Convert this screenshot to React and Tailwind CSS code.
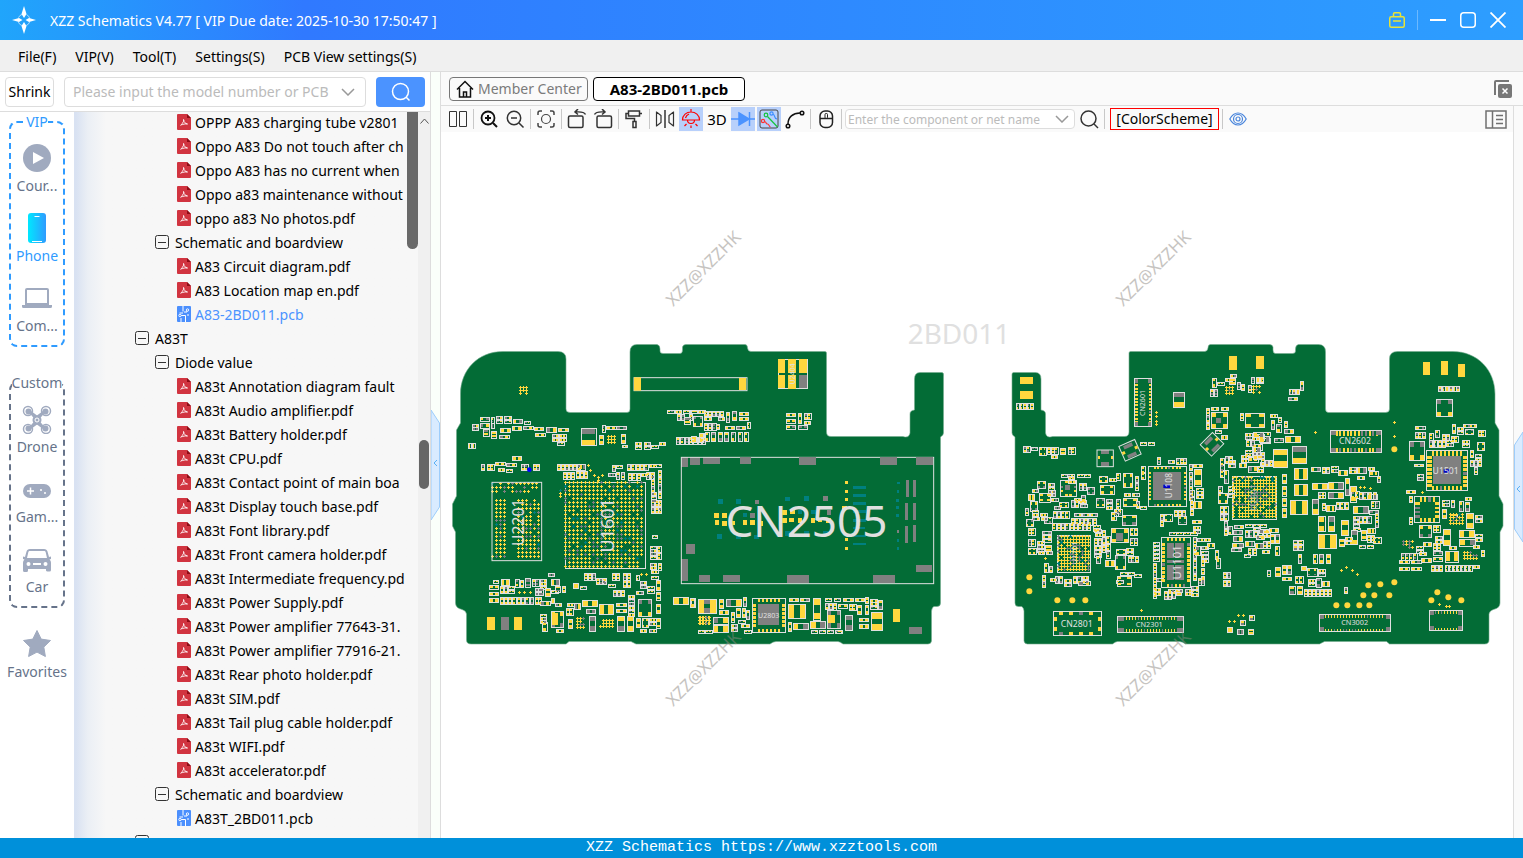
import React from "react";

const YELLOW = "#ffd73e";
const GREY = "#808080";
const TEAL = "#008080";
const SILK = "#e0e0e0";
const BOARD = "#036c36";

const OUTLINE =
  "M460.5 394C460.5 370 478 351.500 503 351.500H558Q566 351.500 566 359V409Q566 412.500 570 412.500H627Q630 412.500 630 409V352Q630 344.500 637 344.500H657Q660 345 660 349V351Q660 353.500 663 353.500H680Q682.500 353.500 682.500 350V347Q683 344.500 686 344.500H745Q747.500 344.500 747.500 348Q748 351.500 751 351.500H825Q826.500 351.500 826.500 353V432Q826.500 436.500 831 436.500H903Q909 438.500 910 433V414Q910 410.500 914.500 410V379Q914.500 372.500 920 372.500H942Q944 372.500 943.500 376V433Q943.500 435.500 940.500 437V603Q940.500 606.500 937 606.500H934Q932 607 931.500 611V641Q931 644 928 644H843Q840 641.500 838 641.500H776Q773 641.500 770 644H636L631 641.500H569L566 644H471Q466.500 644 466.500 640V614Q466 610.500 462 609.500Q455.500 608 455.500 603V532L452.500 526V504L456.500 496V430L460.500 423Z";

/* "x y w h [count dx dy] [q]" or "x y h|v [count dx dy]" for the two stock sizes; q is a four-pad package */
const PARTS_A = `96 283 h;96 293 h;120 262 28 11;120 281 28 13;153 262 9 17;153 281 9 14;168 259 h 2 0 11;194 259 h 2 0 11;
219 268 28 12;253 273 17 9;130 298 17 20;154 304 16 20;181 294 31 14;177 316 30 10;216 288 28 13;249 289 30 10;282 292 29 10;285 309 30 11;
318 293 32 15;354 294 32 11;336 313 h 2 0 12;358 313 h 2 0 12;352 336 h;423 294 45 53;478 316 13 28;486 286 9 20;498 288 30 11;530 288 30 11;
545 312 12 28;546 345 17 8;585 337 h 2 0 11;612 337 h 2 0 11;634 345 h;657 337 h;84 340 9 15 2 12 0;216 378 29 13;124 402 v;141 402 v 2 11 0;
165 397 30 10;198 400 30 10;174 415 h;198 417 h;243 402 v 2 11 0;279 402 v 2 9 0;352 402 v 2 11 0;375 402 v 4 12 0;418 404 18 16;
370 427 v 3 12 0;408 425 v 3 12 0;434 427 9 17;516 405 v;528 405 h;505 430 h;528 427 v 2 15 0;562 402 v 5 13 0;628 404 h;644 402 h;
565 430 v 3 13 0;603 430 h;618 427 v 2 13 0;634 427 v 3 0 21;655 420 v 4 0 22;634 487 16 9 3 0 11;634 510 v 2 13 0;634 531 v 2 13 0;655 510 v 2 0 21;
636 615 17 9;630 648 h 4 0 10;653 648 v 2 0 21;630 700 h 2 0 10;634 722 h;634 738 h;655 700 v;588 735 9 16;324 730 h;
432 730 v 3 12 0;468 744 v 3 11 0;400 760 16 16;420 768 h;505 762 h;516 730 v 2 13 0;550 730 v 2 12 0;550 752 v 2 12 0;519 780 v 3 12 0;488 744 9 16;
148 766 28 11;148 786 28 11;148 805 28 13;159 750 17 9;183 748 26 18;180 770 v 2 12 0;204 768 h 2 0 12;180 803 v 2 12 0;205 803 v 6 13 0;
225 748 12 23;240 752 v;255 746 17 25;276 748 v 2 11 0;300 748 h 3 0 10;333 748 26 19;285 776 h 2 0 11;294 774 17 23;315 774 17 26;334 780 h;345 768 17 18;
368 768 9 20;285 803 v 2 10 0;300 813 30 13;334 805 9 16;345 820 h;378 836 v 2 11 0;382 820 h;402 820 20 18;384 868 14 27;427 810 46 19;438 838 29 13;
478 823 42 31;530 820 30 10;530 838 30 10;564 796 20 9 6 0 11;531 858 22 47;561 858 20 47;448 858 19 47;333 844 38 48 q;300 852 20 9 3 0 10;308 876 13 28;
350 898 h;588 865 14 28;600 898 h;606 866 20 26 q;628 866 h 2 0 12;628 898 h;648 866 14 28;594 808 41 52 q;648 786 14 24;648 822 14 28;648 752 14 30;
600 754 h 2 0 12;590 785 h;622 768 h 2 0 12;700 802 46 21;753 804 12 28;774 808 42 42;774 900 h 2 22 0;
682 240 h;705 241 h;729 240 h;751 240 h;774 241 h;711 252 v 2 12 0;734 262 18 20;760 258 28 32 q;748 254 9 16;709 322 v 7 13 0;780 310 12 26;`;

const PARTS_B = `3 240 h;25 241 h;44 243 9 17 5 12 0;10 258 28 32 q;44 262 h 2 40 0;108 246 11 30;126 243 14 28;147 247 29 10;147 262 29 10;42 280 v 3 13 0;80 282 9 17;
105 289 28 10;138 289 29 10;171 276 9 20;4 318 15 20;27 310 12 28;45 306 12 28 2 20 0;85 306 12 28 3 19 0;144 306 12 28 2 18 0;288 249 29 11;288 268 29 11;
288 286 29 11;324 251 11 30;342 249 v 2 11 0;342 274 h;324 286 29 11;264 87 89 89;2 804 12 28;24 808 55 42;87 808 14 28;87 841 29 13;108 808 47 21;159 802 11 28;
69 862 47 20;69 885 47 22;24 900 h 2 22 0;138 834 13 28;156 836 11 26;123 846 11 30;123 884 20 9 2 0 12;146 870 h;153 882 26 11;170 840 9 28;163 900 h;
297 804 29 11;330 804 29 11;295 823 52 42;309 879 46 20;294 876 11 28;370 804 21 66;361 874 46 22;405 804 h;432 804 h;460 804 30 11;495 804 29 10;
405 819 v 2 13 0;429 820 v;444 822 28 12;477 822 v 2 11 0;363 900 h 4 24 0;412 841 40 54 q;466 855 22 46;502 825 12 28;525 825 11 28;527 801 9 20;
508 864 28 11;508 884 28 11;544 847 34 55;542 808 h 3 0 10;566 810 12 28;438 900 h;`;

const PARTS_C = `48 220 9 18 2 12 0;70 220 9 18 3 11 0;69 348 v 2 11 0;93 351 h;118 352 20 24 q;142 352 v 3 11 0;180 354 16 20;204 352 v 2 11 0;153 377 h;
420 336 h;444 336 h;519 186 35 47;504 392 h;471 382 v;530 384 v 3 10 0;183 432 h 2 19 0;232 432 h 2 20 0;112 455 25 20 q;96 478 h;118 490 34 26 q;144 460 h 3 0 11;
84 494 20 18;90 515 22 28 q;76 535 v;78 568 22 22 q;84 595 v 2 11 0;84 628 v 2 11 0;84 655 24 18 q;96 540 h;154 505 h;178 516 26 16 q;162 530 h;
238 460 v 2 11 0;262 472 22 22 q;245 495 12 22;222 506 h;298 438 24 20 q;300 465 42 28 q;328 446 h;350 430 v;370 430 27 42 q;405 438 v 2 0 22;425 410 v 2 0 18;
290 505 24 26 q;318 508 h 3 0 11;350 508 v 2 0 22;370 504 42 26 q;372 490 h 2 25 0;408 515 v;420 528 h;344 538 v 2 12 0;366 556 44 30 q;334 546 14 26;
158 580 v 9 13 0;132 562 24 18 q;224 550 h 3 24 0;214 565 v 6 13 0;280 585 h 2 0 11;126 605 28 9 3 0 11;112 635 h 3 0 11;136 645 18 20;114 665 h 2 24 0;
282 625 v 2 12 0;284 650 h 3 0 11;306 600 v 3 0 23;320 620 v 3 0 22;334 596 51 42 q;392 596 v 2 11 0;392 625 v 2 11 0;350 658 26 16 q;346 676 31 43 q;380 655 h 2 0 11;
384 678 v 3 11 0;290 680 v;316 690 28 20;350 750 h;352 738 42 30 q;362 726 h 2 22 0;404 732 h;132 700 12 28;148 708 v;126 735 v 2 0 18;150 745 h;166 740 v 2 12 0;
194 748 h 2 0 12;220 740 v 2 13 0;246 740 h 2 0 12;236 755 34 12;
583 419 21 49;568 402 v;580 402 28 10;568 426 v 4 0 22;572 480 v 2 0 22;590 474 h 3 0 11;580 515 24 20;570 515 v 2 0 22;480 552 v 2 0 18;494 552 22 22 q;
522 540 v 3 12 0;536 560 24 22 q;508 606 h 4 21 0;578 570 26 10;580 590 h 2 0 11;460 636 17 9 5 0 12;460 700 v 5 0 21;470 745 h;
580 622 v 6 0 22;592 625 h;586 650 14 26;604 650 h 4 0 13;612 624 20 10;622 640 22 14;646 660 10 28;648 686 12 28;604 690 v 3 0 24;
492 785 v 3 12 0;505 778 h 2 22 0;530 780 14 17;556 778 h 2 0 10;575 770 h 3 0 10;594 745 v 2 10 0;462 776 h 2 0 12;494 800 h;670 726 v 2 11 0;670 750 v 2 11 0;
636 144 12 28;652 156 h;676 146 h;690 134 h;688 146 18 18;712 157 v;724 162 v;630 178 v 2 12 0;755 142 9 17 3 13 0;744 166 v;635 232 h 2 30 0;
620 235 9 20 3 0 22;633 247 50 49 q;720 250 v;736 250 58 43 q;645 300 h;665 315 18 14;736 310 h 2 0 10;758 312 v 3 12 0;740 330 v 2 14 0;782 308 28 10;780 325 30 16;
756 344 30 16;736 360 h 2 0 11;760 366 v 3 12 0;724 376 h 2 0 12;744 382 30 14;718 400 22 12;744 410 30 16;780 396 30 12;
662 386 v 3 0 18;675 380 v 2 12 0;686 392 h 2 0 11;672 420 12 40;656 468 v;655 490 28 30 q;684 468 h 3 0 12;660 530 v 2 0 22;674 530 v 2 0 22;
672 575 v 2 0 22;686 590 10 24;704 585 26 11;736 582 h 3 22 0;700 600 28 14;700 620 28 14;736 602 v 3 13 0;776 602 v 3 13 0;698 640 32 12;736 635 26 14;694 655 30 10;
746 655 v;766 640 24 16;788 662 h;732 672 h;720 872 15 15;747 856 15 15;682 892 15 15;711 897 20 16;746 897 15 16;`;

const PARTS_D = `10 142 9 16 2 11 0;142 153 10 29;108 178 9 16 3 11 0;106 202 28 10;52 253 h;54 272 11 26;76 262 9 14;70 283 14 24;94 274 9 18;94 298 28 12;2 308 30 14;
20 320 30 18;64 325 28 11;97 318 46 20;60 357 44 56;117 348 44 53;124 415 40 33;124 462 40 35;111 510 53 44;88 432 13 28;88 468 13 30;88 506 13 24;88 535 13 28;
0 352 22 16;2 375 30 12;24 366 v 2 0 20;36 390 v 2 12 0;12 408 h 2 0 10;174 411 28 13;178 507 19 46;178 459 46 20;226 458 46 20;226 486 46 20;196 487 h 2 0 10;
208 411 v 2 12 0;235 408 h 2 0 10;255 420 28 16;290 412 h 2 0 10;312 412 28 18;345 412 h;350 424 25 14;372 438 v;314 440 h;278 444 12 52;292 470 18 46;
208 520 v;220 526 26 18;250 518 v 3 13 0;318 488 v 4 14 0;300 528 46 22;344 492 28 16;356 514 v 2 12 0;350 540 26 12;366 550 v 2 0 22;196 560 20 44;
225 560 20 44;264 570 22 46;295 600 18 44;196 612 55 44;258 628 16 22;278 622 h 2 0 12;300 560 h 2 0 12;318 560 v 3 13 0;324 600 16 30;344 596 22 14;342 616 v 2 13 0;
318 645 h 2 24 0;360 622 24 18 q;2 582 h 2 0 12;20 598 28 12;48 596 28 11;10 615 24 14;0 655 v;30 634 v 2 12 0;52 612 12 28;68 612 12 28;68 650 10 26;
120 630 14 14 2 16 0;120 647 14 14 2 16 0;136 674 10 26;180 674 12 26 3 20 0;66 712 16 28;88 706 12 28 2 16 0;44 720 9 18;88 741 28 11;
145 710 16 12;128 740 v 2 12 0;162 716 30 22 q;196 718 h 2 0 11;166 748 h 2 0 11;190 744 14 28;208 754 22 16;154 778 v 7 12 0;110 768 16 26;132 768 17 26;274 772 9 18;
556 169 9 16 5 11 0;610 169 9 16;550 208 49 52 q;488 289 28 10;486 306 v 3 11 0;469 334 45 58 q;530 310 v 2 0 22;548 302 v;568 312 v 2 12 0;598 282 10 28;612 292 h 2 0 11;
632 284 h 2 18 0;636 298 26 16 q;595 318 v 2 10 0;530 332 9 20 4 13 0;580 330 h 2 0 11;628 332 h 2 0 10;676 300 v 2 10 0;672 338 22 24 q;652 362 v;666 372 h 2 0 12;
652 390 v 3 12 0;664 412 v;484 402 28 8;492 432 h 2 0 11;460 480 28 11;468 498 v;568 510 h 2 0 11;594 512 v;618 514 12 30;636 516 14 28;636 502 h;568 538 12 28;
640 550 22 46;592 552 h;570 598 22 48;618 600 47 22;618 628 50 20;668 556 h 2 0 12;668 612 h 2 0 14;684 660 v;498 586 38 36 q;540 586 v 2 11 0;468 562 v;
490 648 h 2 0 12;510 636 26 14;540 640 v 2 12 0;446 670 v 4 12 0;438 690 30 11;474 690 30 11;438 711 30 11;474 711 30 11;506 686 30 11;540 664 28 11;540 682 28 11;
576 664 41 32;536 706 9 18 3 12 0;576 706 9 18 7 12 0;660 706 h;500 668 h;660 646 h;548 620 h 2 0 12;590 650 h;`;

const FILLS_C = [[204, 440, 40, 14], [96, 550, 46, 20], [160, 545, 48, 24], [214, 512, 60, 22], [284, 598, 20, 22], [144, 480, 24, 20]];
const FILLS_D = [[296, 485, 24, 20], [300, 582, 24, 16]];

/* bare copper pads: x y w h colour */
const PADS_A = [
  [141, 861, 24, 39, YELLOW], [183, 861, 24, 39, GREY], [222, 861, 24, 39, YELLOW], [723, 381, 21, 30, GREY], [750, 381, 30, 24, GREY],
  [789, 381, 50, 21, GREY], [738, 642, 27, 30, GREY], [723, 687, 21, 66, GREY], [777, 735, 33, 20, GREY], [336, 850, 18, 36, YELLOW],
];
const PADS_B = [
  [147, 143, 22, 38, YELLOW], [150, 382, 33, 20, GREY], [327, 382, 51, 23, GREY], [570, 382, 51, 23, GREY], [678, 382, 51, 23, GREY],
  [99, 735, 51, 21, GREY], [291, 735, 66, 24, GREY], [549, 735, 66, 24, GREY], [678, 705, 48, 21, GREY], [609, 837, 21, 39, YELLOW],
  [657, 891, 39, 21, GREY], [648, 450, 9, 51, GREY], [669, 450, 9, 51, GREY], [645, 519, 9, 51, GREY], [669, 519, 9, 51, GREY],
  [645, 588, 9, 51, GREY], [669, 585, 9, 51, GREY], [84, 507, 15, 15, TEAL], [138, 507, 15, 15, TEAL], [195, 510, 12, 12, GREY],
  [285, 501, 15, 13, TEAL], [342, 498, 15, 15, TEAL], [399, 498, 15, 15, GREY], [159, 549, 12, 12, TEAL], [180, 549, 15, 15, GREY],
  [324, 540, 12, 12, TEAL], [363, 540, 14, 12, TEAL], [411, 540, 12, 15, GREY], [81, 612, 15, 15, TEAL], [138, 612, 15, 15, TEAL],
  [192, 615, 15, 12, TEAL], [285, 603, 15, 15, TEAL], [342, 603, 15, 12, TEAL], [399, 603, 15, 12, TEAL],
  [72, 549, 15, 15, YELLOW], [96, 549, 15, 15, YELLOW], [75, 570, 12, 15, YELLOW], [96, 573, 15, 15, YELLOW], [120, 573, 15, 12, YELLOW],
  [159, 570, 12, 15, YELLOW], [180, 570, 15, 15, YELLOW], [204, 573, 14, 15, YELLOW], [276, 540, 15, 15, YELLOW], [300, 540, 15, 12, YELLOW],
  [276, 564, 15, 15, YELLOW], [297, 564, 15, 12, YELLOW], [324, 564, 12, 15, YELLOW], [363, 564, 12, 15, YELLOW], [384, 564, 12, 12, YELLOW],
  [408, 564, 15, 15, YELLOW], [465, 453, 9, 9, YELLOW], [465, 480, 9, 9, YELLOW], [465, 504, 9, 9, YELLOW], [456, 528, 15, 12, YELLOW],
  [465, 624, 9, 9, YELLOW], [465, 651, 9, 9, YELLOW], [489, 468, 39, 9, TEAL], [489, 492, 39, 9, TEAL], [489, 516, 39, 9, TEAL],
  [489, 540, 39, 9, TEAL], [489, 566, 39, 9, TEAL], [489, 591, 36, 6, TEAL], [489, 615, 39, 6, TEAL], [489, 639, 39, 6, TEAL],
  [621, 456, 9, 6, TEAL], [620, 480, 7, 9, TEAL], [618, 507, 9, 9, TEAL], [618, 528, 9, 8, TEAL], [618, 552, 9, 9, TEAL],
  [621, 600, 6, 9, GREY], [621, 627, 6, 9, TEAL], [621, 651, 6, 9, TEAL],
  [266, 89, 85, 85, BOARD], [294, 88, 24, 88, YELLOW], [266, 128, 85, 7, BOARD], [264, 88, 20, 40, YELLOW],
  [327, 88, 25, 40, YELLOW], [264, 136, 20, 39, YELLOW], [327, 136, 25, 39, GREY], [204, 822, 63, 63, GREY], [414, 856, 21, 22, YELLOW],
];
const PADS_C = [
  [60, 141, 39, 21, YELLOW], [60, 183, 39, 24, YELLOW], [687, 78, 24, 42, YELLOW], [768, 78, 24, 39, YELLOW], [304, 361, 22, 11, GREY],
  [304, 396, 22, 13, GREY], [293, 378, 7, 9, YELLOW], [332, 378, 8, 9, YELLOW], [459, 426, 84, 84, GREY], [501, 640, 51, 44, GREY],
  [501, 690, 51, 8, GREY], [501, 706, 51, 44, GREY], [522, 640, 4, 110, BOARD], [348, 610, 22, 24, GREY], [648, 264, 16, 16, GREY],
  [195, 465, 15, 15, GREY],
];
const PADS_D = [
  [510, 96, 21, 39, YELLOW], [564, 93, 21, 42, YELLOW], [615, 102, 21, 39, YELLOW], [540, 378, 85, 84, GREY],
];

/* ball grids: x y w h pitch gap-rate silk */
const BALLS_A = [
  [158, 461, 140, 32, 12, 0.12, 0], [170, 511, 34, 172, 12, 0.02, 0], [235, 511, 62, 172, 12, 0.04, 0], [158, 678, 40, 8, 12, 0, 0],
  [377, 458, 238, 252, 12, 0.1, 1], [240, 172, 22, 24, 9, 0.05, 0], [506, 318, 26, 26, 9, 0, 0], [411, 865, 26, 30, 9, 0.1, 0],
  [480, 872, 44, 20, 9, 0.05, 0], [778, 862, 32, 24, 9, 0.1, 0], [361, 480, 3, 26, 9, 0, 0],
];
const BALLS_B = [[30, 862, 34, 24, 9, 0.1, 0]];
const BALLS_C = [
  [174, 618, 96, 104, 9, 0.05, 1], [699, 441, 127, 122, 9, 0.12, 1], [680, 172, 24, 24, 9, 0.1, 0], [760, 168, 24, 24, 9, 0.1, 0],
];
const BALLS_D = [[593, 554, 36, 34, 9, 0.05, 0], [452, 634, 32, 26, 9, 0.1, 0], [633, 666, 38, 24, 9, 0.1, 0]];

/* packages with pins on their edges: x y w h pin pitch corner */
const PACKS_B = [[187, 805, 100, 102, 9, 12, 0]];
const PACKS_C = [
  [403, 145, 52, 145, 8, 10, 11], [445, 409, 115, 120, 7, 11, 0], [484, 622, 88, 151, 10, 12, 0], [160, 844, 145, 73, 9, 30, 0],
  [352, 859, 199, 49, 9, 9, 18], [180, 450, 50, 48, 6, 12, 0],
];
const PACKS_D = [
  [232, 301, 154, 67, 14, 11, 17], [520, 361, 124, 121, 14, 12, 0], [484, 499, 76, 79, 14, 13, 0], [199, 853, 212, 52, 8, 9, 12],
  [529, 841, 100, 61, 8, 9, 14],
];

const DOTS_C = [[88, 742], [88, 784], [172, 811], [217, 811], [256, 811]];
const DOTS_D = [
  [424, 358], [346, 766], [382, 763], [424, 757], [331, 796], [364, 796], [409, 796], [250, 826], [283, 826], [319, 826], [349, 826],
  [535, 811], [553, 787], [586, 802], [625, 811],
];
const MARKS_A = [[445, 407], [451, 421], [463, 436], [475, 442], [487, 436], [475, 450], [238, 788], [254, 788], [271, 788], [605, 733], [620, 733]];
const MARKS_C = [[469, 247], [469, 259], [469, 273], [469, 283], [424, 841], [715, 856], [730, 856], [688, 874], [703, 874], [136, 685]];
const MARKS_D = [[187, 307], [424, 277], [424, 319], [508, 487], [265, 721], [280, 712], [298, 721], [313, 733], [559, 823], [580, 829], [589, 829], [323, 472], [335, 472], [352, 475]];

const noise = (a, b) => {
  const n = Math.sin(a * 12.9898 + b * 78.233) * 43758.5453;
  return n - Math.floor(n);
};

const rect = (x, y, w, h) => `M${x} ${y}h${w}v${h}h${-w}z`;

const readParts = (text) => {
  const list = [];
  text.split(";").forEach((row) => {
    const t = row.trim().split(/\s+/);
    if (t.length < 3) return;
    const quad = t[t.length - 1] === "q";
    if (quad) t.pop();
    const stock = t[2] === "h" || t[2] === "v";
    const [w, h] = stock ? (t[2] === "h" ? [20, 9] : [10, 20]) : [Number(t[2]), Number(t[3])];
    const [n = 1, dx = 0, dy = 0] = t.slice(stock ? 3 : 4).map(Number);
    for (let i = 0; i < n; i++) list.push([Number(t[0]) + i * dx, Number(t[1]) + i * dy, w, h, quad]);
  });
  return list;
};

const fillParts = ([x, y, w, h]) => {
  const list = [];
  for (let cy = y; cy + 9 <= y + h; cy += 24) {
    for (let cx = x; cx + 18 <= x + w; cx += 25) {
      if (noise(cx, cy) > 0.5 && cy + 20 <= y + h) list.push([cx, cy, 10, 20], [cx + 12, cy, 10, 20]);
      else list.push([cx, cy, 20, 9], [cx + 2, cy + 12, 20, 9]);
    }
  }
  return list;
};

const Layer = ({ x, parts, fills = [], pads = [], balls = [], packs = [], dots = [], marks = [], children }) => {
  const d = { silk: "", [YELLOW]: "", [GREY]: "", [TEAL]: "" };
  const cross = (cx, cy, color) => {
    d[color] += rect(cx - 4, cy - 1, 9, 3) + rect(cx - 1, cy - 4, 3, 9);
  };

  [...readParts(parts), ...fills.flatMap(fillParts)].forEach(([px, py, w, h, quad]) => {
    d.silk += rect(px, py, w, h);
    const first = noise(px, py) > 0.72 ? GREY : YELLOW;
    const last = noise(py, px) > 0.72 ? GREY : YELLOW;
    if (quad) {
      const qw = Math.round(w * 0.24);
      const qh = Math.round(h * 0.24);
      d[first] += rect(px + 2, py + 2, qw, qh) + rect(px + w - qw - 2, py + 2, qw, qh);
      d[last] += rect(px + 2, py + h - qh - 2, qw, qh) + rect(px + w - qw - 2, py + h - qh - 2, qw, qh);
      return;
    }
    const flat = w > h;
    const pad = Math.round((flat ? w : h) * 0.3);
    d[first] += flat ? rect(px + 2, py + 2, pad, h - 4) : rect(px + 2, py + 2, w - 4, pad);
    d[last] += flat ? rect(px + w - pad - 2, py + 2, pad, h - 4) : rect(px + 2, py + h - pad - 2, w - 4, pad);
  });

  balls.forEach(([bx, by, w, h, pitch, gaps, silk]) => {
    if (silk) d.silk += rect(bx - 2, by - 2, w + 4, h + 6);
    for (let cy = by; cy <= by + h; cy += pitch) {
      for (let cx = bx; cx <= bx + w; cx += pitch) {
        if (noise(cx, cy) < gaps) continue;
        const mid = Math.hypot((cx - bx) / w - 0.5, (cy - by) / h - 0.5) < 0.3;
        const n = noise(cy, cx);
        cross(cx, cy, n < (mid ? 0.4 : 0.12) ? GREY : n > 0.95 ? TEAL : YELLOW);
      }
    }
  });

  packs.forEach(([px, py, w, h, pin, pitch, corner]) => {
    d.silk += rect(px, py, w, h);
    const tone = (a, b) => (noise(a, b) > 0.85 ? GREY : YELLOW);
    const lead = Math.min(12, Math.round(pitch * 0.55));
    if (!(corner && h > w)) {
      for (let cx = px + 16; cx < px + w - 16; cx += pitch) {
        d[tone(cx, py)] += rect(cx, py + 2, lead, pin);
        d[tone(cx, h)] += rect(cx, py + h - pin - 1, lead, pin);
      }
    }
    if (!(corner && w > h)) {
      for (let cy = py + 18; cy < py + h - 16; cy += pitch) {
        d[tone(cy, px)] += rect(px + 2, cy, pin, lead);
        d[tone(cy, w)] += rect(px + w - pin - 1, cy, pin, lead);
      }
    }
    if (corner) {
      [px + 1, px + w - corner - 1].forEach((cx) => {
        d[GREY] += rect(cx, py + 1, corner, 14) + rect(cx, py + h - 15, corner, 14);
      });
    }
  });

  marks.forEach(([cx, cy]) => cross(cx, cy, YELLOW));

  return (
    <g transform={`translate(${x} 330) scale(${1 / 3})`}>
      <g shapeRendering="crispEdges">
        <path d={d.silk} fill="none" stroke={SILK} strokeWidth="3" />
        <path d={d[TEAL]} fill={TEAL} />
        <path d={d[YELLOW]} fill={YELLOW} />
        <path d={d[GREY]} fill={GREY} />
        {pads.map(([px, py, w, h, color], i) => (
          <rect key={i} x={px} y={py} width={w} height={h} fill={color} />
        ))}
      </g>
      {dots.map(([cx, cy]) => (
        <circle key={`${cx}-${cy}`} cx={cx} cy={cy} r="9" fill={YELLOW} />
      ))}
      {children}
    </g>
  );
};

const Label = ({ x, y, size, turn = 0, color = SILK, children }) => (
  <text transform={`translate(${x} ${y}) rotate(${turn})`} fontSize={size} fill={color} textAnchor="middle" dominantBaseline="central">
    {children}
  </text>
);

const Tilted = ({ x, y, turn }) => (
  <g transform={`translate(${x} ${y}) rotate(${turn})`}>
    <rect x="-26" y="-24" width="52" height="48" fill="none" stroke={SILK} strokeWidth="3" />
    <rect x="-14" y="-20" width="28" height="11" fill={GREY} />
    <rect x="-14" y="10" width="28" height="11" fill={GREY} />
    <rect x="-25" y="-5" width="9" height="9" fill={YELLOW} />
    <rect x="16" y="-5" width="9" height="9" fill={YELLOW} />
  </g>
);

const BoardView = () => (
  <svg viewBox="441 132 1072 706" className="block h-full w-full" role="img" aria-label="2BD011 board">
    <path d={OUTLINE} fill={BOARD} stroke="#74ac8e" strokeWidth="0.6" />
    <path d={OUTLINE} fill={BOARD} stroke="#74ac8e" strokeWidth="0.6" transform="translate(1955.500 0) scale(-1 1)" />
    <Label x={959} y={333} size={28}>2BD011</Label>
    <Layer x={440} parts={PARTS_A} pads={PADS_A} balls={BALLS_A} marks={MARKS_A}>
      <rect x="156" y="457" width="149" height="235" fill="none" stroke={SILK} strokeWidth="3" />
      <rect x="582" y="143" width="339" height="39" fill="none" stroke={SILK} strokeWidth="3" />
      <rect x="582" y="142" width="21" height="40" fill={YELLOW} />
      <rect x="724" y="382" width="757" height="379" fill="none" stroke={SILK} strokeWidth="3" />
      <circle cx="268" cy="419" r="7" fill="#00f" />
      <Label x={235} y={577} size={47} turn={-90}>U2201</Label>
      <Label x={500} y={586} size={54} turn={-90}>U1601</Label>
    </Layer>
    <Layer x={690} parts={PARTS_B} pads={PADS_B} balls={BALLS_B} packs={PACKS_B}>
      <Label x={349} y={569} size={132}>CN2505</Label>
      <Label x={236} y={856} size={21}>U2803</Label>
      <Label x={308} y={132} size={21} turn={-90}>U2404</Label>
    </Layer>
    <Layer x={1000} parts={PARTS_C} fills={FILLS_C} pads={PADS_C} balls={BALLS_C} packs={PACKS_C} dots={DOTS_C} marks={MARKS_C}>
      <rect x="291" y="360" width="49" height="50" fill="none" stroke={SILK} strokeWidth="3" />
      <Tilted x={390} y={361} turn={-24} />
      <Tilted x={636} y={343} turn={-45} />
      <rect x="490" y="464" width="20" height="10" fill="#0000c8" />
      <Label x={504} y={467} size={25} turn={-90}>U1108</Label>
      <Label x={529} y={697} size={34} turn={-90}>U1101</Label>
      <Label x={222} y={669} size={23} turn={-90}>U1701</Label>
      <Label x={763} y={502} size={26} turn={-90} color="#b5bfb0">U2601</Label>
      <Label x={428} y={219} size={21} turn={-90}>CN2601</Label>
      <Label x={230} y={881} size={26}>CN2801</Label>
      <Label x={448} y={883} size={22}>CN2301</Label>
    </Layer>
    <Layer x={1253} parts={PARTS_D} fills={FILLS_D} pads={PADS_D} balls={BALLS_D} packs={PACKS_D} dots={DOTS_D} marks={MARKS_D}>
      <rect x="572" y="418" width="20" height="10" fill="#0000c8" />
      <Label x={578} y={422} size={26}>U1501</Label>
      <Label x={306} y={333} size={26}>CN2602</Label>
      <Label x={305} y={877} size={22}>CN3002</Label>
    </Layer>
    {[[703, 268], [1153, 268], [703, 668], [1153, 668]].map(([x, y]) => (
      <g key={`${x}-${y}`} opacity="0.5">
        <Label x={x} y={y} size={17} turn={-45} color="#8f8a84">XZZ@XZZHK</Label>
      </g>
    ))}
  </svg>
);

const TREE = [
  ["pdf", "OPPP A83 charging tube v2801"],
  ["pdf", "Oppo A83 Do not touch after ch"],
  ["pdf", "Oppo A83 has no current when"],
  ["pdf", "Oppo a83 maintenance without"],
  ["pdf", "oppo a83 No photos.pdf"],
  ["group", "Schematic and boardview"],
  ["pdf", "A83 Circuit diagram.pdf"],
  ["pdf", "A83 Location map en.pdf"],
  ["open", "A83-2BD011.pcb"],
  ["model", "A83T"],
  ["group", "Diode value"],
  ["pdf", "A83t Annotation diagram fault"],
  ["pdf", "A83t Audio amplifier.pdf"],
  ["pdf", "A83t Battery holder.pdf"],
  ["pdf", "A83t CPU.pdf"],
  ["pdf", "A83t Contact point of main boa"],
  ["pdf", "A83t Display touch base.pdf"],
  ["pdf", "A83t Font library.pdf"],
  ["pdf", "A83t Front camera holder.pdf"],
  ["pdf", "A83t Intermediate frequency.pd"],
  ["pdf", "A83t Power Supply.pdf"],
  ["pdf", "A83t Power amplifier 77643-31."],
  ["pdf", "A83t Power amplifier 77916-21."],
  ["pdf", "A83t Rear photo holder.pdf"],
  ["pdf", "A83t SIM.pdf"],
  ["pdf", "A83t Tail plug cable holder.pdf"],
  ["pdf", "A83t WIFI.pdf"],
  ["pdf", "A83t accelerator.pdf"],
  ["group", "Schematic and boardview"],
  ["pcb", "A83T_2BD011.pcb"],
  ["model", "A91"],
];

const INDENT = {
  pdf: "pl-[103px] gap-1",
  pcb: "pl-[103px] gap-1",
  open: "pl-[103px] gap-1 text-[#4b93ff]",
  group: "pl-[81px] gap-1.5",
  model: "pl-[61px] gap-1.5",
};

const PdfIcon = () => (
  <svg viewBox="0 0 14 16" className="h-4 w-3.5 shrink-0">
    <path d="M1 0h9l4 4v11a1 1 0 0 1-1 1H1a1 1 0 0 1-1-1V1a1 1 0 0 1 1-1z" fill="#d13440" />
    <path d="M10 0l4 4h-4z" fill="#8e0d16" />
    <path d="M6.500 5.500c.8 0 .2 3-3 6M6.500 5.500c0 2.500 2 4.200 4 4.500-2.500-.3-4.500.2-6 1" fill="none" stroke="#fff" strokeWidth=".9" />
  </svg>
);

const PcbIcon = () => (
  <svg viewBox="0 0 14 16" className="h-4 w-3.5 shrink-0">
    <rect width="14" height="16" rx="1" fill="#4b8ffd" />
    <path d="M6 0v5.500M6 7H2.500M10 3v3H7M4 9.500h4.500V16M4 12v4M12 9h-2" fill="none" stroke="#fff" strokeWidth="1" />
    <circle cx="10.500" cy="4" r="1.200" fill="#4b8ffd" stroke="#fff" strokeWidth=".9" />
    <circle cx="3" cy="9.500" r="1.200" fill="#4b8ffd" stroke="#fff" strokeWidth=".9" />
  </svg>
);

const MinusBox = () => (
  <svg viewBox="0 0 14 14" className="h-3.5 w-3.5 shrink-0" fill="none" stroke="#333">
    <rect x=".5" y=".5" width="13" height="13" rx="2" />
    <path d="M3 7.500h8" />
  </svg>
);

const TreeRow = ({ kind, name }) => (
  <li>
    <button className={`flex h-6 w-full items-center whitespace-nowrap text-left ${INDENT[kind]}`}>
      {kind === "pdf" && <PdfIcon />}
      {(kind === "pcb" || kind === "open") && <PcbIcon />}
      {(kind === "group" || kind === "model") && <MinusBox />}
      <span>{name}</span>
    </button>
  </li>
);

const ICONS = {
  course: (
    <>
      <circle cx="15" cy="15" r="14" />
      <path d="M11 9v12l11-6z" fill="#fff" />
    </>
  ),
  phone: (
    <>
      <defs>
        <linearGradient id="phone">
          <stop offset="0" stopColor="#00e8ff" />
          <stop offset="1" stopColor="#2f9bff" />
        </linearGradient>
      </defs>
      <rect x="6" y="0" width="18" height="30" rx="3" fill="url(#phone)" />
      <path d="M12.500 3.500h5M10 28.500h10" stroke="#fff" strokeWidth="1" />
    </>
  ),
  computer: (
    <>
      <path fillRule="evenodd" d="M5 5h20a2 2 0 0 1 2 2v15H3V7a2 2 0 0 1 2-2zm0 2v13h20V7z" />
      <path d="M0 22h30v1.500a1.500 1.500 0 0 1-1.500 1.500h-27A1.500 1.500 0 0 1 0 23.500z" />
    </>
  ),
  drone: (
    <>
      <path d="M7 7l8 6 8-6M7 25l8-6 8 6M9 9l12 14M21 9L9 23" fill="none" stroke="currentColor" strokeWidth="2.500" />
      <circle cx="15" cy="16" r="4.500" />
      <circle cx="15" cy="16" r="2" fill="none" stroke="#fff" />
      <g fill="none" stroke="currentColor" strokeWidth="1.500">
        <circle cx="6" cy="7" r="4.500" />
        <circle cx="24" cy="7" r="4.500" />
        <circle cx="6" cy="25" r="4.500" />
        <circle cx="24" cy="25" r="4.500" />
      </g>
      <circle cx="6.500" cy="7.500" r="3" />
      <circle cx="23.500" cy="7.500" r="3" />
      <circle cx="6.500" cy="24.500" r="3" />
      <circle cx="23.500" cy="24.500" r="3" />
    </>
  ),
  game: (
    <>
      <rect x="1" y="10" width="28" height="14" rx="7" />
      <path d="M5 17h7M8.500 13.500v7" stroke="#fff" strokeWidth="1.500" />
      <circle cx="19" cy="16" r="1" fill="#fff" />
      <circle cx="23" cy="19" r="1" fill="#fff" />
    </>
  ),
  car: (
    <path
      fillRule="evenodd"
      d="M8 5h14c2 0 3 1 3.500 2.500L27 13l2-.5v2.500l-1.500.5c1 1 1.500 2 1.500 3.500v7a1.500 1.500 0 0 1-1.500 1.500h-2A1.500 1.500 0 0 1 24 26.500V25H6v1.500A1.500 1.500 0 0 1 4.500 28h-2A1.500 1.500 0 0 1 1 26.500V19c0-1.500.5-2.500 1.500-3.500L1 15v-2.500l2 .5 1.500-5.500C5 6 6 5 8 5zm0 2c-1 0-1.500.5-1.700 1.300L5 14h20l-1.300-5.700C23.500 7.500 23 7 22 7zM6.500 18a2 2 0 1 0 0 4 2 2 0 0 0 0-4zm17 0a2 2 0 1 0 0 4 2 2 0 0 0 0-4zM11 19v2h8v-2z"
    />
  ),
  star: <path d="M15 1.500l4.200 8.600 9.300 1.400-6.700 6.600 1.600 9.400-8.400-4.400-8.400 4.400 1.600-9.400L1.500 11.500l9.300-1.400z" stroke="currentColor" strokeLinejoin="round" />,
};

const Category = ({ icon, active, children }) => (
  <button className={`flex w-full flex-col items-center gap-[3px] ${active ? "text-[#2f9bff]" : "text-[#66738a]"}`}>
    <svg viewBox="0 0 30 30" className={`h-[30px] w-[30px] ${active ? "" : "text-[#a0aabf]"}`} fill="currentColor">
      {ICONS[icon]}
    </svg>
    <span className="h-5 leading-5">{children}</span>
  </button>
);

const Stroke = ({ children, className = "h-5 w-5", color = "#333", box = 20 }) => (
  <svg viewBox={`0 0 ${box} ${box}`} className={className} fill="none" stroke={color} strokeWidth="1.500">
    {children}
  </svg>
);

const Tool = ({ label, on, children }) => (
  <button aria-label={label} className={`flex h-6 w-6 shrink-0 items-center justify-center ${on ? "bg-[#b8d0fb]" : ""}`}>
    {children}
  </button>
);

const Sep = () => <span className="mx-px h-5 w-px shrink-0 bg-[#c8c8c8]" />;

const Chevron = () => (
  <svg viewBox="0 0 14 8" className="h-2 w-3.5" fill="none" stroke="#999" strokeWidth="1.500">
    <path d="M1 1l6 6 6-6" />
  </svg>
);

const TitleBar = () => (
  <header className="flex h-10 shrink-0 items-center bg-linear-to-r from-[#20a5fb] via-[#3079ff] via-20% to-[#2d9eff] text-white">
    <svg viewBox="0 0 24 28" className="ml-3 h-7 w-6" fill="#fff">
      <circle cx="12" cy="14" r="6" fill="none" stroke="#fff" strokeWidth="1" strokeDasharray="5 4.400" strokeDashoffset="-2" opacity=".6" />
      <path d="M12 0l2.500 8-2.500 4-2.500-4zM12 28l2.500-8-2.500-4-2.500 4zM0 14l7-2 3.500 2-3.500 2zM24 14l-7-2-3.500 2 3.500 2z" />
    </svg>
    <h1 className="ml-3.5 text-[14px]">XZZ Schematics V4.77 [ VIP Due date: 2025-10-30 17:50:47 ]</h1>
    <div className="ml-auto flex items-center pr-[17px]">
      <button aria-label="License">
        <Stroke className="h-4 w-4" box={16} color="#e8e337">
          <rect x=".75" y="4.750" width="14.500" height="10.500" rx="1.500" />
          <path d="M4.500 4.500V2A1.200 1.200 0 0 1 5.700.8h4.600A1.200 1.200 0 0 1 11.500 2v2.500M4 9h8" />
        </Stroke>
      </button>
      <span className="mx-3 h-5 w-px bg-white/30" />
      <div className="flex gap-3.5">
        <button aria-label="Minimize">
          <Stroke className="h-4 w-4" box={16} color="#fff"><path d="M0 8h16" strokeWidth="2" /></Stroke>
        </button>
        <button aria-label="Maximize">
          <Stroke className="h-4 w-4" box={16} color="#fff"><rect x=".75" y=".75" width="14.500" height="14.500" rx="3" /></Stroke>
        </button>
        <button aria-label="Close">
          <Stroke className="h-4 w-4" box={16} color="#fff"><path d="M.5.5l15 15M15.500.5l-15 15" strokeWidth="1.800" /></Stroke>
        </button>
      </div>
    </div>
  </header>
);

const Toolbar = () => (
  <div className="flex h-[26px] shrink-0 items-center gap-0.5 bg-[#fafafa] pl-[5px] pr-1.5">
    <Tool label="Split view">
      <Stroke><path d="M1.500 2.500h7v15h-7zM11.500 2.500h7v15h-7z" strokeWidth="1" /></Stroke>
    </Tool>
    <Sep />
    <Tool label="Zoom in">
      <Stroke color="#111"><circle cx="9" cy="9" r="6.500" strokeWidth="1.800" /><path d="M14 14l4 4M9 6v6M6 9h6" strokeWidth="2" /></Stroke>
    </Tool>
    <Tool label="Zoom out">
      <Stroke><circle cx="9" cy="9" r="6.700" /><path d="M14 14l4.500 4.500M6 9h6" /></Stroke>
    </Tool>
    <Sep />
    <Tool label="Fit">
      <Stroke color="#444">
        <path d="M2 6V4a2 2 0 0 1 2-2h2M14 2h2a2 2 0 0 1 2 2v2M18 14v2a2 2 0 0 1-2 2h-2M6 18H4a2 2 0 0 1-2-2v-2" />
        <circle cx="10" cy="10" r="4.500" strokeWidth="1.200" />
      </Stroke>
    </Tool>
    <Sep />
    <Tool label="Rotate left">
      <Stroke><rect x="1.500" y="7" width="14.500" height="11.500" rx="1.500" /><path d="M18.500 5.500c-1-2-4-3-10-2.500M11 0L8 3l3 2.500" /></Stroke>
    </Tool>
    <Tool label="Rotate right">
      <Stroke><rect x="4" y="7" width="14.500" height="11.500" rx="1.500" /><path d="M1.500 5.500c1-2 4-3 10-2.500M9 0l3 3-3 2.500" /></Stroke>
    </Tool>
    <Sep />
    <Tool label="Format">
      <Stroke><path d="M4.500 2h11v5h-11zM4.500 4.500H2v5h8.500V12M15.500 4.500H18M9 12.500h3v6H9z" /></Stroke>
    </Tool>
    <Sep />
    <Tool label="Mirror">
      <Stroke><path d="M10 1v18" /><path d="M1.500 2.500v15M1.500 3L6 6.500v7L1.500 17M6 6.500v7M18.500 2.500v15M18.500 3L14 6.500v7l4.500 3.500" strokeWidth="1.200" /></Stroke>
    </Tool>
    <Tool label="Light" on>
      <Stroke color="#f00">
        <path d="M1.500 11c0-5 4-8 8.500-8s8.500 3 8.500 8zM10 0v3M6.500 11c0 2.200 1.500 3.500 3.500 3.500s3.500-1.300 3.500-3.500M10 16.500V19M5.500 15l-2 2M14.500 15l2 2M8 5c-2 1-3 2-3.500 4" strokeWidth="1.200" />
      </Stroke>
    </Tool>
    <button className="h-6 w-6 shrink-0 text-[15px] leading-6">3D</button>
    <Tool label="Diode" on>
      <Stroke color="#4b93ff" className="h-6 w-6" box={24}><path d="M0 12h24M18.500 5v14" /><path d="M8 6l10 6-10 6z" fill="#4b93ff" /></Stroke>
    </Tool>
    <Tool label="Nets" on>
      <Stroke>
        <rect x="1" y="1" width="18" height="18" rx="2" stroke="#444" strokeWidth="1" />
        <path d="M8.500 7.500L18.500 18" stroke="#14c43c" strokeWidth="1.200" />
        <path d="M14 5.500c2.500 0 .5 4 4 4.500" stroke="#3a8cff" strokeWidth="1.200" />
        <circle cx="12.500" cy="4.500" r="1.600" stroke="#3a8cff" strokeWidth="1.200" />
        <circle cx="7" cy="6" r="1.800" stroke="#14c43c" strokeWidth="1.200" />
        <circle cx="4" cy="12" r="1.600" stroke="#f33" strokeWidth="1.200" />
        <path d="M5.500 12.500c2 0 1 2.500 3 2.500s1 2.500 3 3" stroke="#f33" strokeWidth="1.200" />
      </Stroke>
    </Tool>
    <Tool label="Curve">
      <Stroke color="#111"><path d="M3 15C3 8 8 4 15 4" /><circle cx="3" cy="17" r="1.800" /><circle cx="17" cy="4" r="1.800" /></Stroke>
    </Tool>
    <Sep />
    <Tool label="Mouse">
      <Stroke color="#222"><rect x="4" y="2" width="12.500" height="16.500" rx="5" /><path d="M4 9.500h12.500" /><rect x="9" y="4.500" width="2.500" height="5" rx="1" strokeWidth="1" /></Stroke>
    </Tool>
    <Sep />
    <div className="flex h-5 w-[230px] shrink-0 items-center rounded-sm border border-[#ddd] bg-white pr-[5px]">
      <input aria-label="Component or net name" placeholder="Enter the component or net name" className="h-full min-w-0 flex-1 pl-0.5 text-xs outline-none placeholder:text-[#bbb]" />
      <button aria-label="Show names"><Chevron /></button>
    </div>
    <Tool label="Search">
      <Stroke><circle cx="9.500" cy="9.500" r="7.500" /><path d="M15 15l4 4" /></Stroke>
    </Tool>
    <Sep />
    <button className="ml-0.5 h-[22px] w-[109px] shrink-0 border border-[#f00] text-[14px] leading-5">[ColorScheme]</button>
    <Sep />
    <Tool label="Visibility">
      <Stroke color="#4a86dc" className="h-[18px] w-[18px]" box={18}>
        <path d="M.8 9C3 5 6 3 9 3s6 2 8.200 6C15 13 12 15 9 15S3 13 .8 9z" strokeWidth="1.200" />
        <circle cx="9" cy="9" r="4.500" strokeWidth="1.200" />
        <circle cx="9" cy="9" r="2" strokeWidth="1.200" />
      </Stroke>
    </Tool>
    <button aria-label="Layers panel" className="ml-auto">
      <svg viewBox="0 0 22 19" className="h-[19px] w-[22px]" fill="none" stroke="#707070" strokeWidth="1.500">
        <path d="M1 1h20v17H1zM7.500 1v17M11 5.500h7M11 9.500h7M11 13.500h7" />
      </svg>
    </button>
  </div>
);

const Handle = ({ label, edge, arrow }) => (
  <button aria-label={label} className="block h-[110px] w-full">
    <svg viewBox="0 0 9 110" preserveAspectRatio="none" className="h-full w-full">
      <path d={edge} fill="#d9ebff" stroke="#9dcdfb" />
      <path d={arrow} fill="none" stroke="#5ab0f5" />
    </svg>
  </button>
);

const App = () => {
  return (
    <div className="flex h-screen flex-col overflow-hidden bg-white font-['Noto_Sans',sans-serif] text-[14px] text-black">
      <TitleBar />
      <nav className="flex h-8 shrink-0 items-center gap-[19px] border-b border-[#ddd] bg-[#f0f0f0] pl-[18px] pt-0.5">
        <button>File(F)</button>
        <button>VIP(V)</button>
        <button>Tool(T)</button>
        <button>Settings(S)</button>
        <button>PCB View settings(S)</button>
      </nav>

      <main className="flex min-h-0 flex-1">
        <section className="flex w-[431px] shrink-0 flex-col border-r border-[#ddd]">
          <div className="flex h-10 shrink-0 items-center border-b border-[#ddd] pl-[5px] pr-[5px]">
            <button className="h-[30px] w-[49px] shrink-0 rounded-sm border border-[#ddd]">Shrink</button>
            <div className="ml-2.5 flex h-[30px] min-w-0 flex-1 items-center rounded-sm border border-[#ddd] pr-2.5">
              <input aria-label="Model number" placeholder="Please input the model number or PCB" className="h-full min-w-0 flex-1 pl-2 outline-none placeholder:text-[#bbb]" />
              <button aria-label="Show models" className="ml-1.5"><Chevron /></button>
            </div>
            <button aria-label="Search" className="ml-2.5 flex h-[30px] w-[49px] shrink-0 items-center justify-center rounded-sm bg-[#4b93ff]">
              <Stroke color="#fff"><circle cx="9.500" cy="9.500" r="8" /><path d="M15 15l3.500 3.500" /></Stroke>
            </button>
          </div>

          <div className="flex min-h-0 flex-1">
            <aside className="flex w-[74px] shrink-0 flex-col overflow-hidden">
              <fieldset className="mx-[9px] flex flex-col gap-[17px] rounded-lg border-2 border-dashed border-[#2f9bff] pb-[9px] pt-[11px]">
                <legend className="mx-auto h-5 leading-5 text-[#2f9bff]">VIP</legend>
                <Category icon="course">Cour...</Category>
                <Category icon="phone" active>Phone</Category>
                <Category icon="computer">Com...</Category>
              </fieldset>
              <fieldset className="mx-[9px] mt-[26px] flex flex-col gap-[17px] rounded-lg border-2 border-dashed border-[#66738a] pb-[9px] pt-[11px]">
                <legend className="mx-auto h-5 leading-5 text-[#66738a]">Custom</legend>
                <Category icon="drone">Drone</Category>
                <Category icon="game">Gam...</Category>
                <Category icon="car">Car</Category>
              </fieldset>
              <div className="mt-[21px]">
                <Category icon="star">Favorites</Category>
              </div>
            </aside>

            <div className="min-w-0 flex-1 overflow-hidden bg-linear-to-r from-[#d9e2f2] from-[2px] via-[#ebeff5] via-[14px] to-[#f7f7f7] to-[32px]">
              <ul className="-mt-0.5">
                {TREE.map(([kind, name], i) => (
                  <TreeRow key={i} kind={kind} name={name} />
                ))}
              </ul>
            </div>
            <div className="w-[11px] shrink-0 bg-[#f7f7f7]">
              <div className="h-[137px] w-full rounded-b-full bg-[#696969]" />
            </div>
            <div className="flex w-3 shrink-0 flex-col items-center bg-[#f0f0f0] pt-1.5">
              <svg viewBox="0 0 9 6" className="h-1.5 w-[9px]" fill="none" stroke="#555"><path d="M.5 5.500l4-4.500 4 4.500" /></svg>
              <div className="mt-[316px] h-[49px] w-2.5 rounded-full bg-[#666]" />
            </div>
          </div>
        </section>

        <div className="flex w-[9px] shrink-0 flex-col bg-[#fafffa] pt-[338px]">
          <Handle label="Collapse file list" edge="M0 0L8.500 13V97L0 110z" arrow="M6 50L3 53l3 3" />
        </div>

        <section className="flex min-w-0 flex-1 flex-col border-l border-[#ddd]">
          <div className="flex h-[34px] shrink-0 items-center gap-[5px] border-b border-[#ddd] bg-[#fafafa] pl-2 pr-[11px]">
            <button className="flex h-6 w-[139px] items-center gap-1 rounded-sm border border-[#777] pl-1.5 text-[#7b7b7b]">
              <Stroke className="h-[18px] w-[18px]" box={18} color="#111">
                <path d="M1 9.500L9 1.500l8 8M3.500 8v9h11V8M7.500 17v-5h3v5" />
              </Stroke>
              Member Center
            </button>
            <button className="h-6 w-[152px] rounded-sm border border-black bg-white text-[15px] leading-5 font-bold">A83-2BD011.pcb</button>
            <button aria-label="Close all tabs" className="ml-auto">
              <svg viewBox="0 0 18 18" className="h-[18px] w-[18px]">
                <path d="M1 15V2a1 1 0 0 1 1-1h13" fill="none" stroke="#777" strokeWidth="2" />
                <rect x="4" y="4" width="14" height="14" rx="2" fill="#777" />
                <path d="M8.500 8.500l5 5M13.500 8.500l-5 5" stroke="#fff" strokeWidth="1.500" />
              </svg>
            </button>
          </div>
          <div className="flex min-h-0 flex-1">
            <div className="flex min-w-0 flex-1 flex-col">
              <Toolbar />
              <div className="min-h-0 flex-1 bg-white">
                <BoardView />
              </div>
            </div>
            <div className="w-2.5 shrink-0 border-l border-[#ddd] bg-[#fafafa] pt-[326px]">
              <Handle label="Expand side panel" edge="M9 0L.5 13V97L9 110z" arrow="M6 54L3 57l3 3" />
            </div>
          </div>
        </section>
      </main>

      <footer className="h-5 shrink-0 bg-[#0090da] text-center font-['Liberation_Mono',monospace] text-[15px] leading-5 text-white">
        XZZ Schematics https://www.xzztools.com
      </footer>
    </div>
  );
};

export default App;
